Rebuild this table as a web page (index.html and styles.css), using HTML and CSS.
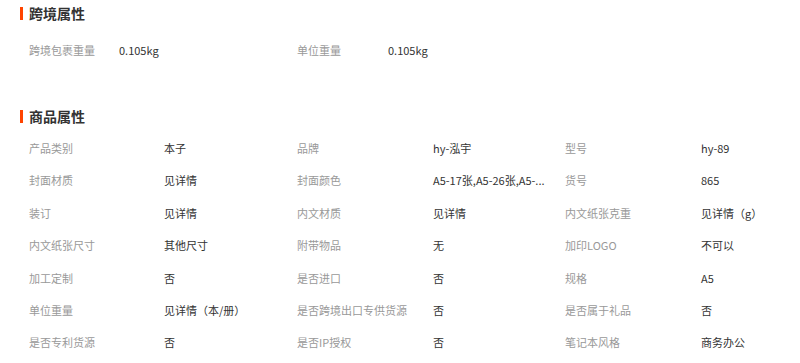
FILE: index.html
```html
<!DOCTYPE html>
<html lang="zh-CN">
<head>
<meta charset="utf-8">
<title>属性</title>
<link rel="stylesheet" href="styles.css">
</head>
<body>
<div class="page">
  <h2 class="section-title">跨境属性</h2>
  <div class="brief-grid">
    <span class="k">跨境包裹重量</span><span class="v">0.105kg</span>
    <span class="k">单位重量</span><span class="v">0.105kg</span>
  </div>

  <h2 class="section-title title-gap">商品属性</h2>
  <div class="attr-grid">
    <span class="k">产品类别</span><span class="v">本子</span>
    <span class="k">品牌</span><span class="v">hy-泓宇</span>
    <span class="k">型号</span><span class="v">hy-89</span>

    <span class="k">封面材质</span><span class="v">见详情</span>
    <span class="k">封面颜色</span><span class="v">A5-17张,A5-26张,A5-...</span>
    <span class="k">货号</span><span class="v">865</span>

    <span class="k">装订</span><span class="v">见详情</span>
    <span class="k">内文材质</span><span class="v">见详情</span>
    <span class="k">内文纸张克重</span><span class="v">见详情（g）</span>

    <span class="k">内文纸张尺寸</span><span class="v">其他尺寸</span>
    <span class="k">附带物品</span><span class="v">无</span>
    <span class="k">加印LOGO</span><span class="v">不可以</span>

    <span class="k">加工定制</span><span class="v">否</span>
    <span class="k">是否进口</span><span class="v">否</span>
    <span class="k">规格</span><span class="v">A5</span>

    <span class="k">单位重量</span><span class="v">见详情（本/册）</span>
    <span class="k">是否跨境出口专供货源</span><span class="v">否</span>
    <span class="k">是否属于礼品</span><span class="v">否</span>

    <span class="k">是否专利货源</span><span class="v">否</span>
    <span class="k">是否IP授权</span><span class="v">否</span>
    <span class="k">笔记本风格</span><span class="v">商务办公</span>
  </div>
</div>
</body>
</html>
```

FILE: styles.css
```css
html, body {
  margin: 0;
  padding: 0;
  background: #ffffff;
}

body {
  font-family: "Noto Sans CJK SC", "Noto Sans", sans-serif;
  color: #333333;
  overflow: hidden;
}

.page {
  width: 800px;
}

.section-title {
  display: flex;
  align-items: center;
  gap: 6px;
  height: 26px;
  margin: 0;
  padding-left: 20px;
  font-size: 14px;
  font-weight: bold;
  color: #333333;
  line-height: 26px;
}

.section-title::before {
  content: "";
  display: block;
  width: 3px;
  height: 13px;
  background: #ff4400;
}

.title-gap {
  margin-top: 37px;
}

.brief-grid {
  display: grid;
  grid-template-columns: 90px 178px 91px 1fr;
  grid-auto-rows: 33px;
  align-items: center;
  margin-top: 7px;
  padding-left: 29px;
  font-size: 11px;
}

.attr-grid {
  display: grid;
  grid-template-columns: 135px 133px 136px 132px 136px 1fr;
  grid-auto-rows: 32.4px;
  align-items: center;
  margin-top: 2.8px;
  padding-left: 29px;
  font-size: 11px;
}

.k {
  color: #999999;
  white-space: nowrap;
  line-height: 16px;
}

.v {
  color: #333333;
  white-space: nowrap;
  line-height: 16px;
}
```
